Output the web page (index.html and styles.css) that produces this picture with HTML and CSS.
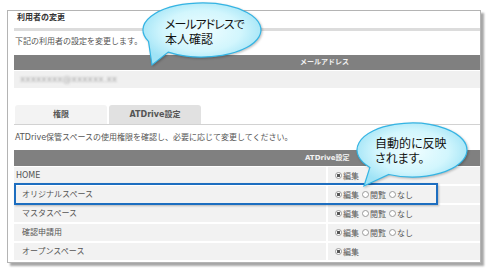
FILE: index.html
```html
<!DOCTYPE html>
<html lang="ja">
<head>
<meta charset="utf-8">
<title>利用者の変更</title>
<link rel="stylesheet" href="styles.css">
</head>
<body>
<div class="frame">
  <div class="title">利用者の変更</div>
  <p class="desc">下記の利用者の設定を変更します。</p>
  <div class="bar bar-mail"><span>メールアドレス</span></div>
  <div class="mailrow"><span class="blur">xxxxxxxx@xxxxxx.xx</span></div>
  <div class="tabs">
    <div class="tab">権限</div>
    <div class="tab active">ATDrive設定</div>
  </div>
  <p class="desc2">ATDrive保管スペースの使用権限を確認し、必要に応じて変更してください。</p>
  <div class="bar bar-at"><span>ATDrive設定</span></div>
  <div class="rows">
    <div class="row">
      <div class="name">HOME</div>
      <div class="perm"><span class="opt"><i class="radio on"></i>編集</span></div>
    </div>
    <div class="row">
      <div class="name sub">オリジナルスペース</div>
      <div class="perm"><span class="opt"><i class="radio on"></i>編集</span><span class="opt"><i class="radio"></i>閲覧</span><span class="opt"><i class="radio"></i>なし</span></div>
    </div>
    <div class="row">
      <div class="name sub">マスタスペース</div>
      <div class="perm"><span class="opt"><i class="radio on"></i>編集</span><span class="opt"><i class="radio"></i>閲覧</span><span class="opt"><i class="radio"></i>なし</span></div>
    </div>
    <div class="row">
      <div class="name sub">確認申請用</div>
      <div class="perm"><span class="opt"><i class="radio on"></i>編集</span><span class="opt"><i class="radio"></i>閲覧</span><span class="opt"><i class="radio"></i>なし</span></div>
    </div>
    <div class="row">
      <div class="name sub">オープンスペース</div>
      <div class="perm"><span class="opt"><i class="radio on"></i>編集</span></div>
    </div>
  </div>
  <div class="highlight"></div>
</div>

<div class="callout c1">
  <svg width="130" height="70" viewBox="0 0 130 70">
    <defs>
      <radialGradient id="g1" cx="50%" cy="45%" r="55%">
        <stop offset="0" stop-color="#effdff"/>
        <stop offset="0.6" stop-color="#d2f6fd"/>
        <stop offset="1" stop-color="#9fe3f6"/>
      </radialGradient>
    </defs>
    <path d="M10.5 41.4 A59 27 0 1 1 30.2 52.1 L14 65 Z" fill="url(#g1)" stroke="#33b4e4" stroke-width="1.2"/>
  </svg>
  <div class="ctext"><span class="tight">メールアドレスで</span><br>本人確認</div>
</div>

<div class="callout c2">
  <svg width="125" height="75" viewBox="0 0 125 75">
    <defs>
      <radialGradient id="g2" cx="50%" cy="45%" r="55%">
        <stop offset="0" stop-color="#effdff"/>
        <stop offset="0.6" stop-color="#d2f6fd"/>
        <stop offset="1" stop-color="#9fe3f6"/>
      </radialGradient>
    </defs>
    <path d="M17.9 49.4 A55 27 0 1 1 36.8 56.5 L12 68 Z" fill="url(#g2)" stroke="#33b4e4" stroke-width="1.2"/>
  </svg>
  <div class="ctext">自動的に反映<br>されます。</div>
</div>
</body>
</html>
```

FILE: styles.css
```css
body {
  margin: 0;
  width: 490px;
  height: 273px;
  overflow: hidden;
  position: relative;
  background: #fff;
  font-family: "DejaVu Sans", "Noto Sans CJK JP", sans-serif;
  font-size: 8px;
  color: #555;
}

.frame {
  position: relative;
  box-sizing: border-box;
  margin: 10px 0 0 7px;
  width: 474px;
  height: 253px;
  border: 1px solid #b4b4b4;
  box-shadow: 3px 3px 2px rgba(0, 0, 0, 0.35);
  padding-left: 6px;
  background: #fff;
}

.title {
  height: 17px;
  line-height: 14px;
  padding-left: 3px;
  font-weight: bold;
  color: #333;
  border-bottom: 3px solid #dcdcdc;
}

.desc {
  margin: 0;
  width: fit-content;
  height: 23px;
  line-height: 22px;
  padding-left: 1px;
}

.bar {
  background: #808080;
  color: #f2f2f2;
  font-weight: bold;
  font-size: 7px;
}

.bar-mail {
  margin-top: 1px;
  height: 15px;
  line-height: 15px;
  padding-left: 286px;
}

.mailrow {
  margin-top: 1px;
  height: 17px;
  line-height: 17px;
  background: #f0f0f0;
  padding-left: 6px;
}

.blur {
  color: #a8a8a8;
  font-size: 9px;
  filter: blur(1.3px);
}

.tabs {
  display: flex;
  gap: 2px;
  margin-top: 17px;
  padding-left: 1px;
  border-bottom: 1px solid #d2d2d2;
}

.tab {
  width: 92px;
  height: 19px;
  line-height: 19px;
  text-align: center;
  font-weight: bold;
  color: #555;
  background: #f3f3f3;
  border-radius: 3px 3px 0 0;
}

.tab.active {
  background: #e1e1e1;
}

.desc2 {
  margin: 0;
  width: fit-content;
  height: 25px;
  line-height: 25px;
  padding-left: 1px;
}

.bar-at {
  height: 16px;
  line-height: 16px;
  padding-left: 291px;
}

.rows {
  display: flex;
  flex-direction: column;
  gap: 2px;
  margin-top: 1px;
}

.row {
  display: grid;
  grid-template-columns: 312px 1fr;
  height: 17px;
}

.name {
  background: #f2f2f2;
  padding-left: 2px;
  line-height: 17px;
}

.name.sub {
  padding-left: 8px;
}

.perm {
  background: #f2f2f2;
  margin-left: 2px;
  padding-left: 7px;
  display: flex;
  align-items: center;
}

.opt {
  display: inline-flex;
  align-items: center;
  margin-right: 3px;
}

.radio {
  display: inline-block;
  box-sizing: border-box;
  width: 7px;
  height: 7px;
  border: 1px solid #9a9a9a;
  border-radius: 50%;
  background: #fff;
  margin-right: 1px;
}

.radio.on {
  background: radial-gradient(circle, #555 0 1.4px, #fff 1.9px);
}

.highlight {
  position: absolute;
  left: 6px;
  top: 172px;
  width: 424px;
  height: 22px;
  box-sizing: border-box;
  border: 2px solid #1d6ec0;
  box-shadow: 1px 1px 2px rgba(0, 0, 0, 0.25);
}

.callout {
  position: absolute;
}

.callout svg {
  display: block;
  filter: drop-shadow(1px 1px 1px rgba(0, 0, 0, 0.25));
}

.c1 {
  left: 138px;
  top: 0;
}

.c2 {
  left: 352px;
  top: 118px;
}

.ctext {
  position: absolute;
  font-family: "Noto Sans CJK JP", sans-serif;
  font-feature-settings: "palt";
  font-size: 12px;
  line-height: 15px;
  color: #111;
  white-space: nowrap;
}

.tight {
  letter-spacing: -1px;
}

.c1 .ctext {
  left: 27px;
  top: 16px;
}

.c2 .ctext {
  left: 23px;
  top: 17px;
}
```
